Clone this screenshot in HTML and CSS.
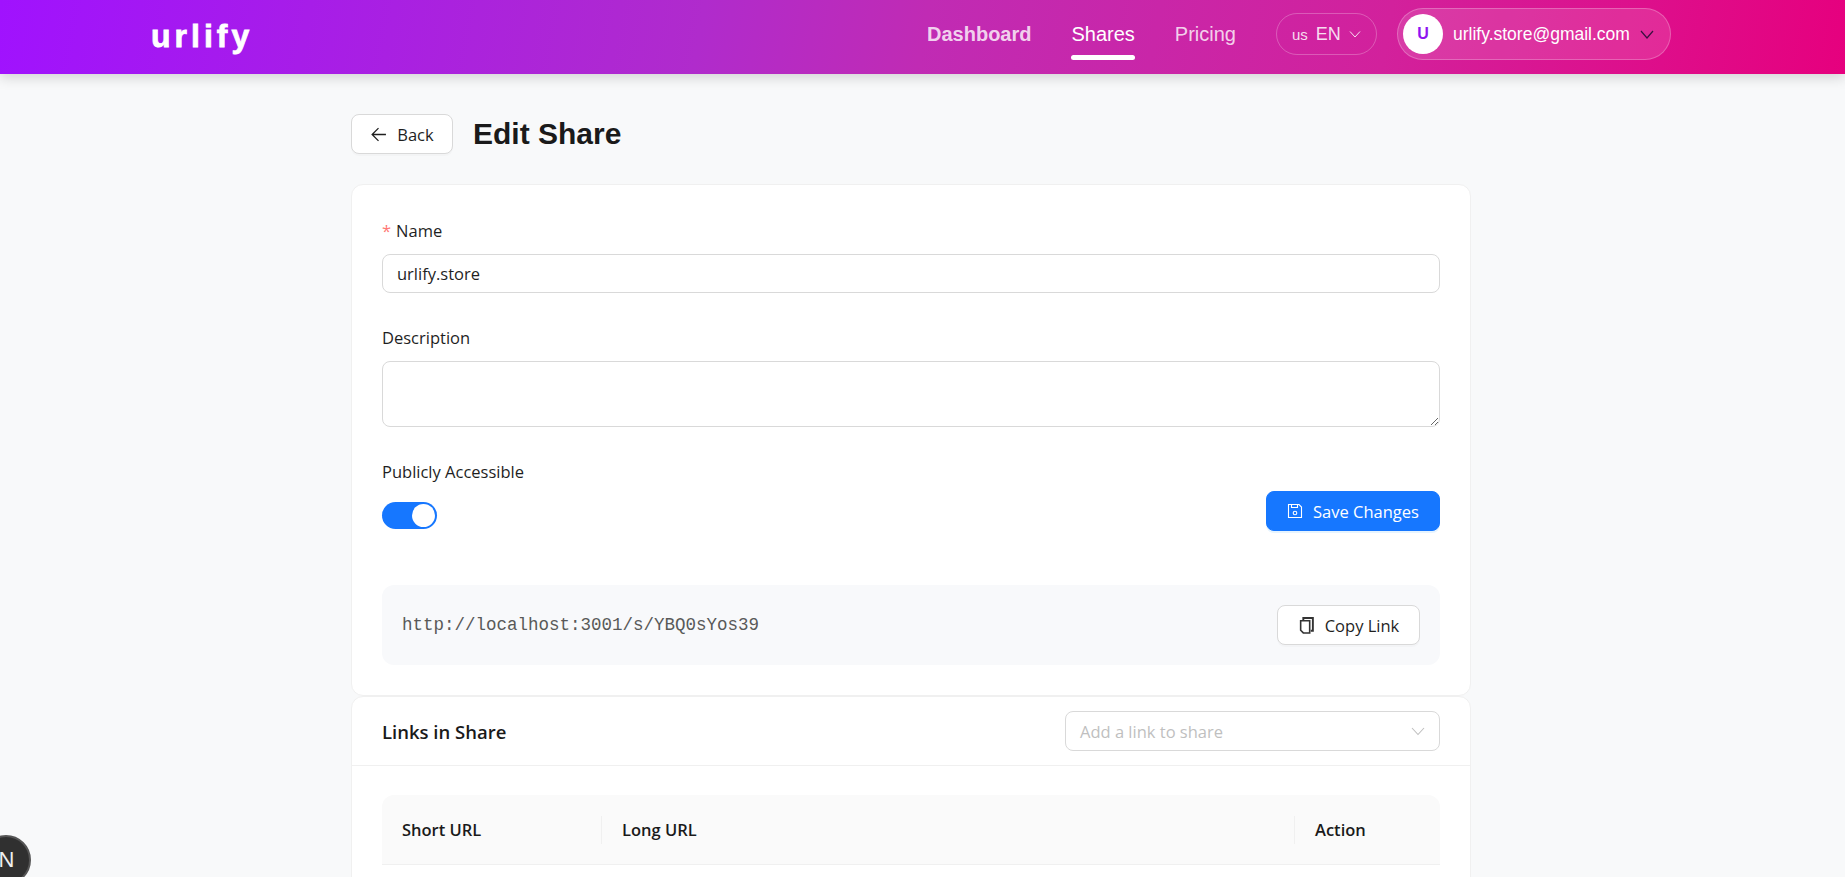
FILE: index.html
```html
<!DOCTYPE html>
<html lang="en">
  <head>
    <meta charset="UTF-8" />
    <meta name="viewport" content="width=device-width, initial-scale=1.0" />
    <title>Edit Share - urlify</title>
    <link rel="stylesheet" href="styles.css">
  </head>
  <body>
    <header class="topbar">
      <a class="logo">urlify</a>
      <nav class="nav">
        <a class="nav-link nav-bold">Dashboard</a>
        <a class="nav-link nav-active">Shares</a>
        <a class="nav-link">Pricing</a>
      </nav>
      <button class="lang-pill">
        <span class="lang-code">us</span>
        <span class="lang-name">EN</span>
        <svg class="chevron" width="12" height="12" viewBox="0 0 12 12"><path d="M1 3.500 6 9l5-5.500" fill="none" stroke="currentColor" stroke-width="1"/></svg>
      </button>
      <button class="user-pill">
        <span class="avatar">U</span>
        <span class="user-email">urlify.store@gmail.com</span>
        <svg class="user-chevron" width="14" height="14" viewBox="0 0 14 14"><path d="M1 4l6 7 6-7" fill="none" stroke="currentColor" stroke-width="1.2"/></svg>
      </button>
    </header>

    <main class="page">
      <div class="page-head">
        <button class="btn btn-back">
          <svg width="17" height="17" viewBox="0 0 16 16"><path d="M15 8H2M8 2 2 8l6 6" fill="none" stroke="currentColor" stroke-width="1.2"/></svg>
          Back
        </button>
        <h1 class="page-title">Edit Share</h1>
      </div>

      <section class="card form-card">
        <div class="field">
          <label class="field-label"><span class="required">*</span>Name</label>
          <input class="text-input" type="text" value="urlify.store" />
        </div>
        <div class="field">
          <label class="field-label">Description</label>
          <textarea class="text-area"></textarea>
        </div>
        <div class="form-bottom">
          <div>
            <label class="field-label">Publicly Accessible</label>
            <span class="switch"><span class="switch-knob"></span></span>
          </div>
          <button class="btn btn-primary">
            <svg width="16" height="16" viewBox="0 0 16 16" fill="none" stroke="currentColor" stroke-width="1.1"><path d="M1.500 1.500h10.500l2.500 2.500v10.500h-13z"/><path d="M4.500 1.500v3h6v-3"/><circle cx="8" cy="10" r="1.800"/></svg>
            Save Changes
          </button>
        </div>
        <div class="link-box">
          <span class="link-url">http://localhost:3001/s/YBQ0sYos39</span>
          <button class="btn btn-copy">
            <svg width="17" height="17" viewBox="0 0 16 16" fill="none" stroke="#333"><path d="M5 3V1h9v12h-2" stroke-width="1.800"/><path d="M2.500 3.500H11v11.500H5l-2.500-2.500z" stroke-width="1.500"/></svg>
            Copy Link
          </button>
        </div>
      </section>

      <section class="card links-card">
        <div class="links-head">
          <h2 class="links-title">Links in Share</h2>
          <div class="link-select">
            <span>Add a link to share</span>
            <svg width="14" height="14" viewBox="0 0 14 14"><path d="M1 4l6 6.500L13 4" fill="none" stroke="currentColor" stroke-width="1.100"/></svg>
          </div>
        </div>
        <div class="links-body">
          <div class="table-head">
            <div class="col col-short">Short URL</div>
            <div class="col col-long">Long URL</div>
            <div class="col col-action">Action</div>
          </div>
        </div>
      </section>
    </main>

    <div class="dev-badge">N</div>
  </body>
</html>
```

FILE: styles.css
```css
* {
  box-sizing: border-box;
}
html,
body {
  height: 877px;
  overflow: hidden;
}
body {
  margin: 0;
  background: #f8f9fa;
  color: #1f1f1f;
  font-family: "Open Sans", "Noto Sans", sans-serif;
  font-size: 16.5px;
}
button {
  font: inherit;
  cursor: pointer;
}

/* top bar */
.topbar {
  display: flex;
  align-items: center;
  height: 74px;
  padding: 0 174px 6px 151px;
  background: linear-gradient(100deg, #a012fe 0%, #b02bcc 38%, #c02bb4 50%, #d2219c 75%, #e6007e 100%);
  box-shadow: 0 4px 12px rgba(0, 0, 0, 0.15);
  color: #fff;
  font-family: "Liberation Sans", Arial, sans-serif;
}
.logo {
  margin-top: 4px;
  margin-right: auto;
  font-size: 32px;
  font-weight: 700;
  letter-spacing: 4px;
  -webkit-text-stroke: 0.8px #fff;
}
.nav {
  display: flex;
  gap: 40px;
  margin-right: 40px;
}
.nav-link {
  position: relative;
  font-size: 20px;
  color: rgba(255, 255, 255, 0.8);
}
.nav-bold {
  font-weight: 700;
}
.nav-active {
  color: #fff;
}
.nav-active::after {
  content: "";
  position: absolute;
  left: 0;
  right: 0;
  bottom: -14px;
  height: 5px;
  border-radius: 3px;
  background: #fff;
}
.lang-pill {
  display: flex;
  align-items: center;
  gap: 8px;
  height: 42px;
  width: 101px;
  padding: 0 14px 0 15px;
  margin-right: 20px;
  border: 1px solid rgba(255, 255, 255, 0.25);
  border-radius: 21px;
  background: transparent;
  color: rgba(255, 255, 255, 0.85);
}
.lang-code {
  font-size: 15px;
}
.lang-name {
  font-size: 18px;
}
.user-pill {
  display: flex;
  align-items: center;
  height: 52px;
  width: 274px;
  padding: 0 16px 0 5px;
  border: 1px solid rgba(255, 255, 255, 0.25);
  border-radius: 26px;
  background: rgba(255, 255, 255, 0.12);
  color: #fff;
}
.avatar {
  display: flex;
  align-items: center;
  justify-content: center;
  width: 40px;
  height: 40px;
  border-radius: 50%;
  background: #fff;
  color: #8f13f0;
  font-size: 16px;
  font-weight: 700;
}
.user-email {
  margin-left: 10px;
  font-size: 17.5px;
}
.user-chevron {
  margin-left: auto;
  color: #3a1040;
}

/* page */
.page {
  width: 1120px;
  margin-left: 351px;
}
.page-head {
  display: flex;
  align-items: center;
  gap: 20px;
  padding: 40px 0 30px;
}
.page-title {
  margin: 0;
  font-family: "Liberation Sans", Arial, sans-serif;
  font-size: 30px;
  font-weight: 700;
  color: #1a1a1a;
}
.btn {
  display: inline-flex;
  align-items: center;
  justify-content: center;
  gap: 10px;
  height: 40px;
  padding: 0 18px;
  border: 1px solid #d9d9d9;
  border-radius: 8px;
  background: #fff;
  box-shadow: 0 2px 0 rgba(0, 0, 0, 0.02);
  color: #1f1f1f;
  white-space: nowrap;
}
.btn-back {
  width: 102px;
}
.btn-copy {
  width: 143px;
}
.btn-primary {
  width: 174px;
  border-color: #1677ff;
  background: #1677ff;
  color: #fff;
  box-shadow: 0 2px 0 rgba(5, 145, 255, 0.1);
}
.card {
  border: 1px solid #f0f0f0;
  border-radius: 12px;
  background: #fff;
}
.form-card {
  height: 512px;
  padding: 34px 30px 0;
}
.field {
  margin-bottom: 33px;
}
.field-label {
  display: block;
  height: 24px;
  line-height: 24px;
  margin-bottom: 11px;
}
.required {
  margin-right: 5px;
  color: #ff7875;
}
.text-input,
.text-area {
  display: block;
  width: 100%;
  padding: 0 14px;
  border: 1px solid #d9d9d9;
  border-radius: 8px;
  background: #fff;
  color: #1f1f1f;
  font: inherit;
}
.text-input {
  height: 39px;
}
.text-area {
  height: 66px;
  resize: vertical;
}
.form-bottom {
  display: flex;
  justify-content: space-between;
  align-items: flex-end;
  height: 69px;
}
.form-bottom .field-label {
  margin: 0 0 18px;
}
.form-bottom .btn-primary {
  margin-bottom: -2px;
}
.switch {
  display: flex;
  justify-content: flex-end;
  align-items: center;
  width: 55px;
  height: 27px;
  padding-right: 2px;
  border-radius: 14px;
  background: #1677ff;
}
.switch-knob {
  width: 23px;
  height: 23px;
  border-radius: 50%;
  background: #fff;
}
.link-box {
  display: flex;
  justify-content: space-between;
  align-items: center;
  height: 80px;
  margin-top: 56px;
  padding: 0 20px;
  border-radius: 12px;
  background: #f8f9fb;
}
.link-url {
  font-family: "Liberation Mono", "Courier New", monospace;
  font-size: 17.5px;
  color: #595959;
}
.links-card {
  height: 300px;
}
.links-head {
  display: flex;
  justify-content: space-between;
  align-items: center;
  height: 69px;
  padding: 0 30px;
  border-bottom: 1px solid #f0f0f0;
}
.links-title {
  margin: 0;
  font-size: 18.5px;
  font-weight: 600;
  color: #1a1a1a;
}
.link-select {
  display: flex;
  justify-content: space-between;
  align-items: center;
  width: 375px;
  height: 40px;
  padding: 0 14px;
  border: 1px solid #d9d9d9;
  border-radius: 8px;
  color: #bfbfbf;
}
.links-body {
  padding: 29px 30px 0;
}
.table-head {
  display: flex;
  align-items: center;
  height: 70px;
  border-bottom: 1px solid #f0f0f0;
  border-radius: 12px 12px 0 0;
  background: #fafafa;
  font-weight: 600;
  color: #1a1a1a;
}
.col {
  position: relative;
  padding-left: 21px;
}
.col-short {
  width: 219px;
  padding-left: 20px;
}
.col-long {
  width: 693px;
}
.col-action {
  flex: 1;
}
.col-long::before,
.col-action::before {
  content: "";
  position: absolute;
  left: 0;
  top: 50%;
  width: 1px;
  height: 28px;
  margin-top: -14px;
  background: #f0f0f0;
}

/* dev indicator, hangs off the corner of the window */
.dev-badge {
  position: fixed;
  left: -19px;
  top: 835px;
  width: 50px;
  height: 50px;
  border: 2px solid #555;
  border-radius: 50%;
  background: #303030;
  color: #eee;
  font-family: "Liberation Sans", Arial, sans-serif;
  font-size: 22px;
  line-height: 46px;
  text-align: center;
  padding-left: 1px;
}
```
